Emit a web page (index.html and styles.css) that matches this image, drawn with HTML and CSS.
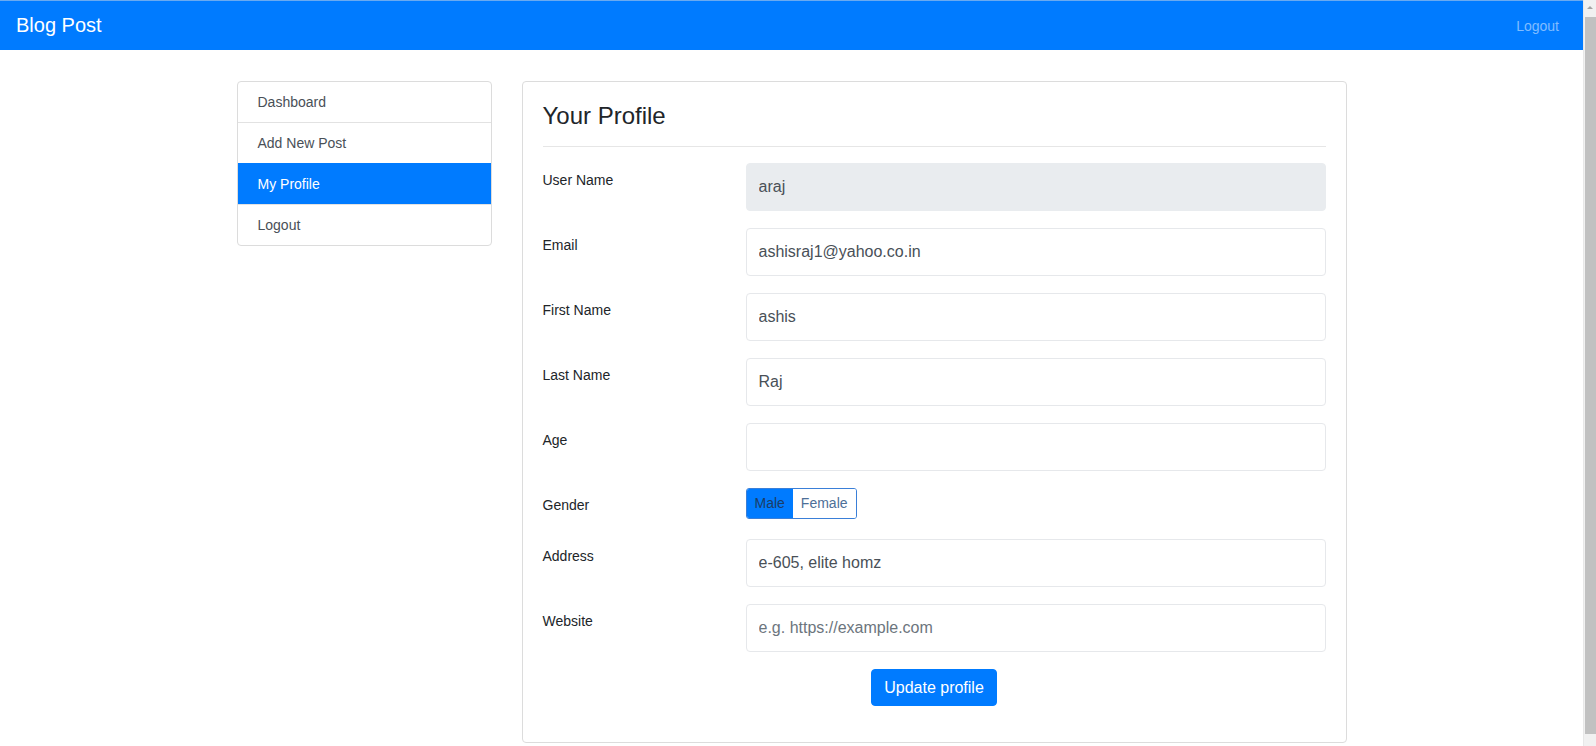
FILE: index.html
```html
<!DOCTYPE html>
<html lang="en">
<head>
<meta charset="utf-8">
<title>Blog Post</title>
<link rel="stylesheet" href="styles.css">
</head>
<body>
<div class="page">
  <nav class="navbar">
    <a class="brand" href="#">Blog Post</a>
    <a class="nav-link" href="#">Logout</a>
  </nav>
  <div class="container">
    <aside class="side-col">
      <div class="list-group">
        <a class="list-item" href="#">Dashboard</a>
        <a class="list-item" href="#">Add New Post</a>
        <a class="list-item active" href="#">My Profile</a>
        <a class="list-item" href="#">Logout</a>
      </div>
    </aside>
    <main class="main-col">
      <div class="card">
        <div class="card-body">
          <h4 class="card-title">Your Profile</h4>
          <hr class="divider">
          <form class="profile-form">
            <div class="form-row">
              <label class="form-label">User Name</label>
              <input class="form-input readonly" type="text" value="araj" readonly>
            </div>
            <div class="form-row">
              <label class="form-label">Email</label>
              <input class="form-input" type="text" value="ashisraj1@yahoo.co.in">
            </div>
            <div class="form-row">
              <label class="form-label">First Name</label>
              <input class="form-input" type="text" value="ashis">
            </div>
            <div class="form-row">
              <label class="form-label">Last Name</label>
              <input class="form-input" type="text" value="Raj">
            </div>
            <div class="form-row">
              <label class="form-label">Age</label>
              <input class="form-input" type="text" value="">
            </div>
            <div class="form-row gender-row">
              <label class="form-label">Gender</label>
              <div class="toggle">
                <span class="toggle-btn selected">Male</span><span class="toggle-btn">Female</span>
              </div>
            </div>
            <div class="form-row">
              <label class="form-label">Address</label>
              <input class="form-input" type="text" value="e-605, elite homz">
            </div>
            <div class="form-row">
              <label class="form-label">Website</label>
              <input class="form-input" type="text" placeholder="e.g. https://example.com">
            </div>
            <div class="submit-row">
              <button class="btn-primary" type="button">Update profile</button>
            </div>
          </form>
        </div>
      </div>
    </main>
  </div>
</div>
<div class="scrollbar">
  <div class="scroll-arrow"></div>
  <div class="scroll-thumb"></div>
</div>
</body>
</html>
```

FILE: styles.css
```css
html, body {
  margin: 0;
  padding: 0;
  overflow: hidden;
  height: 100%;
}
body {
  font-family: "Liberation Sans", Arial, sans-serif;
  font-size: 14px;
  line-height: 1.5;
  color: #212529;
  background: #fff;
}
.page {
  width: calc(100% - 13px);
}
.navbar {
  background: #007bff;
  border-top: 1px solid #6aaaf0;
  height: 49px;
  display: flex;
  align-items: center;
  justify-content: space-between;
  padding: 0 24px 0 16px;
}
.brand {
  color: #fff;
  font-size: 20px;
  text-decoration: none;
  line-height: 49px;
}
.nav-link {
  color: #80bdff;
  font-size: 14px;
  text-decoration: none;
  padding-top: 1px;
}
.container {
  width: 1140px;
  margin: 0 auto;
  padding-top: 31px;
  display: flex;
}
.side-col {
  width: 285px;
  padding: 0 15px;
  box-sizing: border-box;
}
.main-col {
  width: 855px;
  padding: 0 15px;
  box-sizing: border-box;
}
.list-group {
  border: 1px solid #dcdcdc;
  border-radius: 4px;
  overflow: hidden;
}
.list-item {
  display: block;
  padding: 10px 20px;
  line-height: 20px;
  color: #495057;
  text-decoration: none;
  border-top: 1px solid #e2e2e2;
}
.list-item:first-child {
  border-top: 0;
}
.list-item.active {
  background: #007bff;
  color: #fff;
  border-top-color: #007bff;
}
.card {
  border: 1px solid #dcdcdc;
  border-radius: 4px;
}
.card-body {
  padding: 20px;
}
.card-title {
  margin: 0;
  font-size: 24px;
  font-weight: 400;
  line-height: 28.8px;
}
.divider {
  border: 0;
  border-top: 1px solid #e6e6e6;
  margin: 15px 0 16px;
}
.profile-form {
  margin: 0;
}
.form-row {
  display: grid;
  grid-template-columns: 173px 1fr;
  column-gap: 30px;
  margin-bottom: 17px;
  align-items: start;
}
.gender-row {
  margin-bottom: 20px;
}
.form-label {
  padding-top: 7px;
  line-height: 21px;
}
.form-input {
  box-sizing: border-box;
  height: 48px;
  width: 100%;
  padding: 0 12px;
  font-family: inherit;
  font-size: 16px;
  color: #495057;
  border: 1px solid #e6e8eb;
  border-radius: 4px;
  background: #fff;
  outline: none;
}
.form-input::placeholder {
  color: #6c757d;
}
.form-input.readonly {
  background: #e9ecef;
  border-color: #e9ecef;
}
.toggle {
  display: flex;
  width: fit-content;
  border: 1px solid #3a7fd8;
  border-radius: 3px;
  overflow: hidden;
  height: 29px;
}
.toggle-btn {
  display: block;
  padding: 0 8px;
  line-height: 29px;
  font-size: 14px;
  color: #4d6f98;
  background: #fff;
}
.toggle-btn.selected {
  background: #007bff;
  color: #1c3d66;
}
.submit-row {
  display: flex;
  justify-content: center;
  margin-bottom: 16px;
}
.btn-primary {
  font-family: inherit;
  font-size: 16px;
  line-height: 24px;
  padding: 6px 12px;
  height: 37px;
  color: #fff;
  background: #007bff;
  border: 1px solid #007bff;
  border-radius: 4px;
}
.scrollbar {
  position: fixed;
  top: 0;
  right: 0;
  width: 13px;
  height: 100%;
  background: #f1f1f1;
  border-left: 1px solid #e8e8e8;
  box-sizing: border-box;
}
.scroll-arrow {
  position: absolute;
  top: 6px;
  left: 3px;
  width: 0;
  height: 0;
  border-left: 3px solid transparent;
  border-right: 3px solid transparent;
  border-bottom: 3px solid #a3a3a3;
}
.scroll-thumb {
  position: absolute;
  top: 17px;
  left: 1px;
  right: 0;
  bottom: 12px;
  background: #c1c1c1;
}
```
